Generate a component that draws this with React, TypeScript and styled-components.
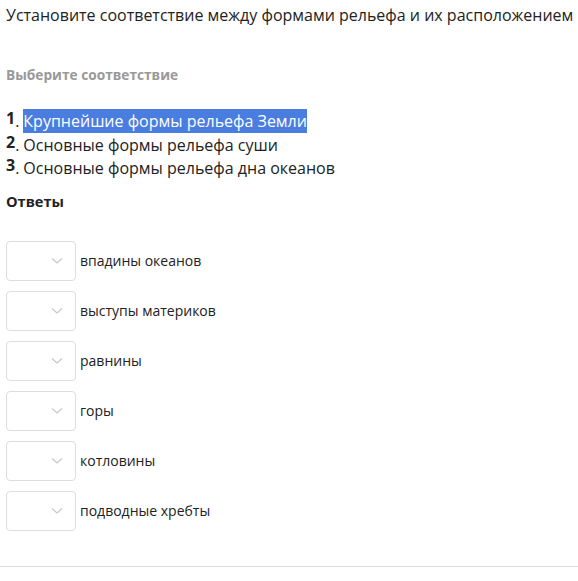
import React from "react";
import styled, { createGlobalStyle } from "styled-components";

const Global = createGlobalStyle`
  body {
    margin: 0;
    background: #fff;
    font-family: "Open Sans", "Noto Sans", sans-serif;
    color: #222;
  }
`;

const Page = styled.div`
  width: 578px;
  height: 581px;
  display: flex;
  flex-direction: column;
  box-sizing: border-box;
`;

const Content = styled.div`
  padding: 0 6px;
  display: flex;
  flex-direction: column;
`;

const Title = styled.div`
  font-size: 16px;
  line-height: 22px;
  margin-top: 4px;
  color: #222;
  white-space: nowrap;
`;

const Hint = styled.div`
  margin-top: 40px;
  font-size: 13.7px;
  font-weight: 700;
  color: #999;
  line-height: 18px;
`;

const List = styled.ol`
  list-style: none;
  margin: 26px 0 0;
  padding: 0;
`;

const Item = styled.li`
  font-size: 16px;
  line-height: 23.5px;
  color: #222;
`;

const Num = styled.span`
  font-weight: 700;
  font-size: 16px;
  position: relative;
  top: -3px;
`;

const Text = styled.span<{ $selected?: boolean }>`
  margin-left: 4px;
  background: ${(p) => (p.$selected ? "#4a7de0" : "transparent")};
  color: ${(p) => (p.$selected ? "#fff" : "#222")};
  padding: 1px 0;
`;

const AnswersTitle = styled.div`
  margin-top: 10px;
  font-size: 14.6px;
  font-weight: 700;
  line-height: 20px;
`;

const Rows = styled.div`
  margin-top: 30px;
  display: flex;
  flex-direction: column;
  gap: 10px;
`;

const Row = styled.div`
  display: flex;
  align-items: center;
  gap: 4px;
`;

const SelectBox = styled.div`
  width: 70px;
  height: 40px;
  box-sizing: border-box;
  border: 1px solid #ddd;
  border-radius: 4px;
  display: flex;
  align-items: center;
  justify-content: flex-end;
  padding-right: 12px;
`;

const Label = styled.span`
  font-size: 14px;
  color: #222;
`;

const Divider = styled.div`
  margin-top: auto;
  margin-bottom: 14px;
  height: 1px;
  background: #ddd;
`;

const Chevron = () => (
  <svg width="12" height="8" viewBox="0 0 12 8">
    <path d="M1 1.5 L6 6 L11 1.5" fill="none" stroke="#c8c8c8" strokeWidth="1.2" />
  </svg>
);

const items = [
  "Крупнейшие формы рельефа Земли",
  "Основные формы рельефа суши",
  "Основные формы рельефа дна океанов",
];

const answers = [
  "впадины океанов",
  "выступы материков",
  "равнины",
  "горы",
  "котловины",
  "подводные хребты",
];

export default function App() {
  return (
    <Page>
      <Global />
      <Content>
        <Title>Установите соответствие между формами рельефа и их расположением</Title>
        <Hint>Выберите соответствие</Hint>
        <List>
          {items.map((t, i) => (
            <Item key={i}>
              <Num>{i + 1}</Num>.<Text $selected={i === 0}>{t}</Text>
            </Item>
          ))}
        </List>
        <AnswersTitle>Ответы</AnswersTitle>
        <Rows>
          {answers.map((a) => (
            <Row key={a}>
              <SelectBox>
                <Chevron />
              </SelectBox>
              <Label>{a}</Label>
            </Row>
          ))}
        </Rows>
      </Content>
      <Divider />
    </Page>
  );
}
